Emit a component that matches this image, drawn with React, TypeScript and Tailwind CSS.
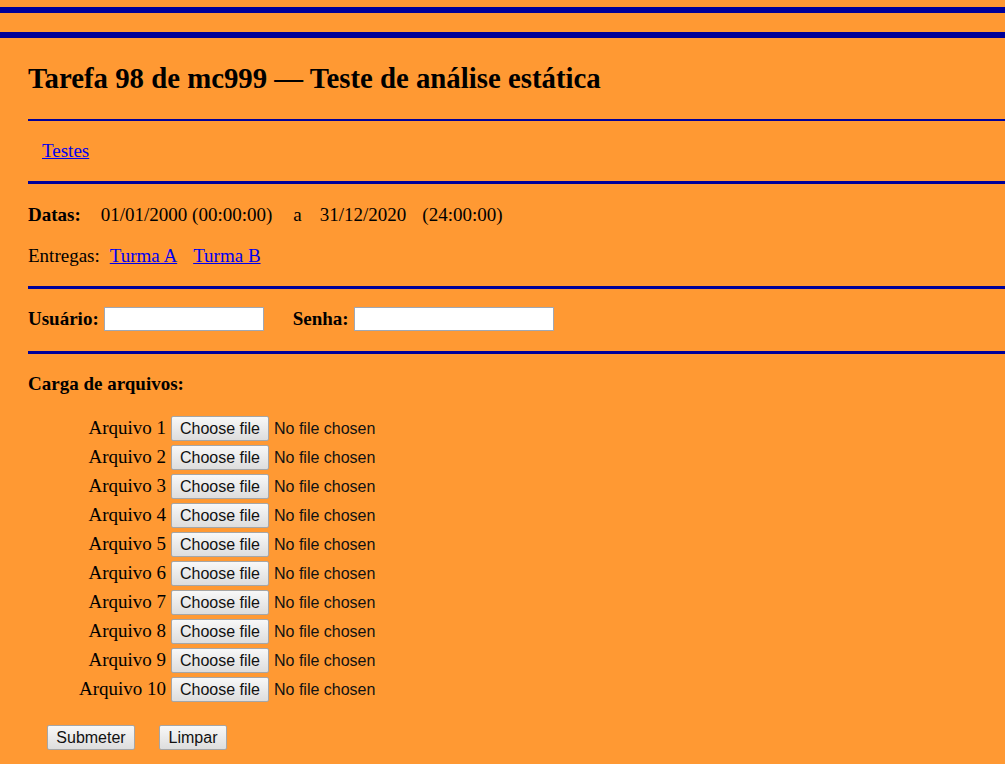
import React from "react";

const serif = { fontFamily: '"Liberation Serif", "Times New Roman", serif' };

function FakeButton({ children, className = "" }: { children: React.ReactNode; className?: string }) {
  return (
    <span
      className={
        "inline-flex items-center justify-center h-[25px] border border-[#a6a6a6] rounded-[2px] bg-gradient-to-b from-[#f8f8f8] to-[#dddddd] text-[16px] leading-none text-[#111] " +
        className
      }
      style={{ fontFamily: '"Liberation Sans", Arial, sans-serif' }}
    >
      {children}
    </span>
  );
}

export default function App() {
  const files = Array.from({ length: 10 }, (_, i) => i + 1);
  return (
    <div className="min-h-[764px] w-full bg-[#ff9933] text-black text-[19px] overflow-hidden" style={serif}>
      <div className="pt-[7px]">
        <div className="h-[6px] bg-[#000099]" />
        <div className="h-[19px]" />
        <div className="h-[6px] bg-[#000099]" />
      </div>
      <div className="pl-[28px]">
        <h1 className="mt-[24px] h-[32px] leading-[32px] text-[28.8px] font-bold whitespace-nowrap">
          Tarefa 98 de mc999 — Teste de análise estática
        </h1>
        <div className="mt-[25px] h-[2px] bg-[#000099]" />
        <div className="h-[60px] flex items-center pl-[14px]">
          <a href="#" className="text-[#0000ee] underline">Testes</a>
        </div>
        <div className="h-[3px] bg-[#000099]" />
        <div className="pt-[20px] pb-[19px]">
          <div className="h-[22px] leading-[22px] whitespace-nowrap">
            <b>Datas:</b>
            <span className="ml-[20px]">01/01/2000 (00:00:00)</span>
            <span className="ml-[21px]">a</span>
            <span className="ml-[18px]">31/12/2020</span>
            <span className="ml-[16px]">(24:00:00)</span>
          </div>
          <div className="mt-[19px] h-[22px] leading-[22px] whitespace-nowrap">
            Entregas:
            <a href="#" className="ml-[10px] text-[#0000ee] underline">Turma A</a>
            <a href="#" className="ml-[16px] text-[#0000ee] underline">Turma B</a>
          </div>
        </div>
        <div className="h-[3px] bg-[#000099]" />
        <div className="pt-[18px] pb-[20px]">
          <div className="h-[24px] flex items-center">
            <b>Usuário:</b>
            <span className="ml-[5px] inline-block w-[160px] h-[24px] bg-white border border-[#a0a8b4]" />
            <b className="ml-[29px]">Senha:</b>
            <span className="ml-[5px] inline-block w-[200px] h-[24px] bg-white border border-[#a0a8b4]" />
          </div>
        </div>
        <div className="h-[3px] bg-[#000099]" />
        <div className="pt-[19px] h-[41px] leading-[22px] font-bold">Carga de arquivos:</div>
        <div className="pt-[19px] flex flex-col">
          {files.map((n) => (
            <div key={n} className="h-[29px] flex items-center">
              <span className="w-[138px] text-right whitespace-nowrap">Arquivo {n}</span>
              <FakeButton className="ml-[5px] w-[98px]">Choose file</FakeButton>
              <span
                className="ml-[5px] text-[16px] text-[#111] whitespace-nowrap"
                style={{ fontFamily: '"Liberation Sans", Arial, sans-serif' }}
              >
                No file chosen
              </span>
            </div>
          ))}
        </div>
        <div className="mt-[21px] flex items-center pl-[19px]">
          <FakeButton className="w-[88px]">Submeter</FakeButton>
          <FakeButton className="ml-[24px] w-[68px]">Limpar</FakeButton>
        </div>
      </div>
    </div>
  );
}
